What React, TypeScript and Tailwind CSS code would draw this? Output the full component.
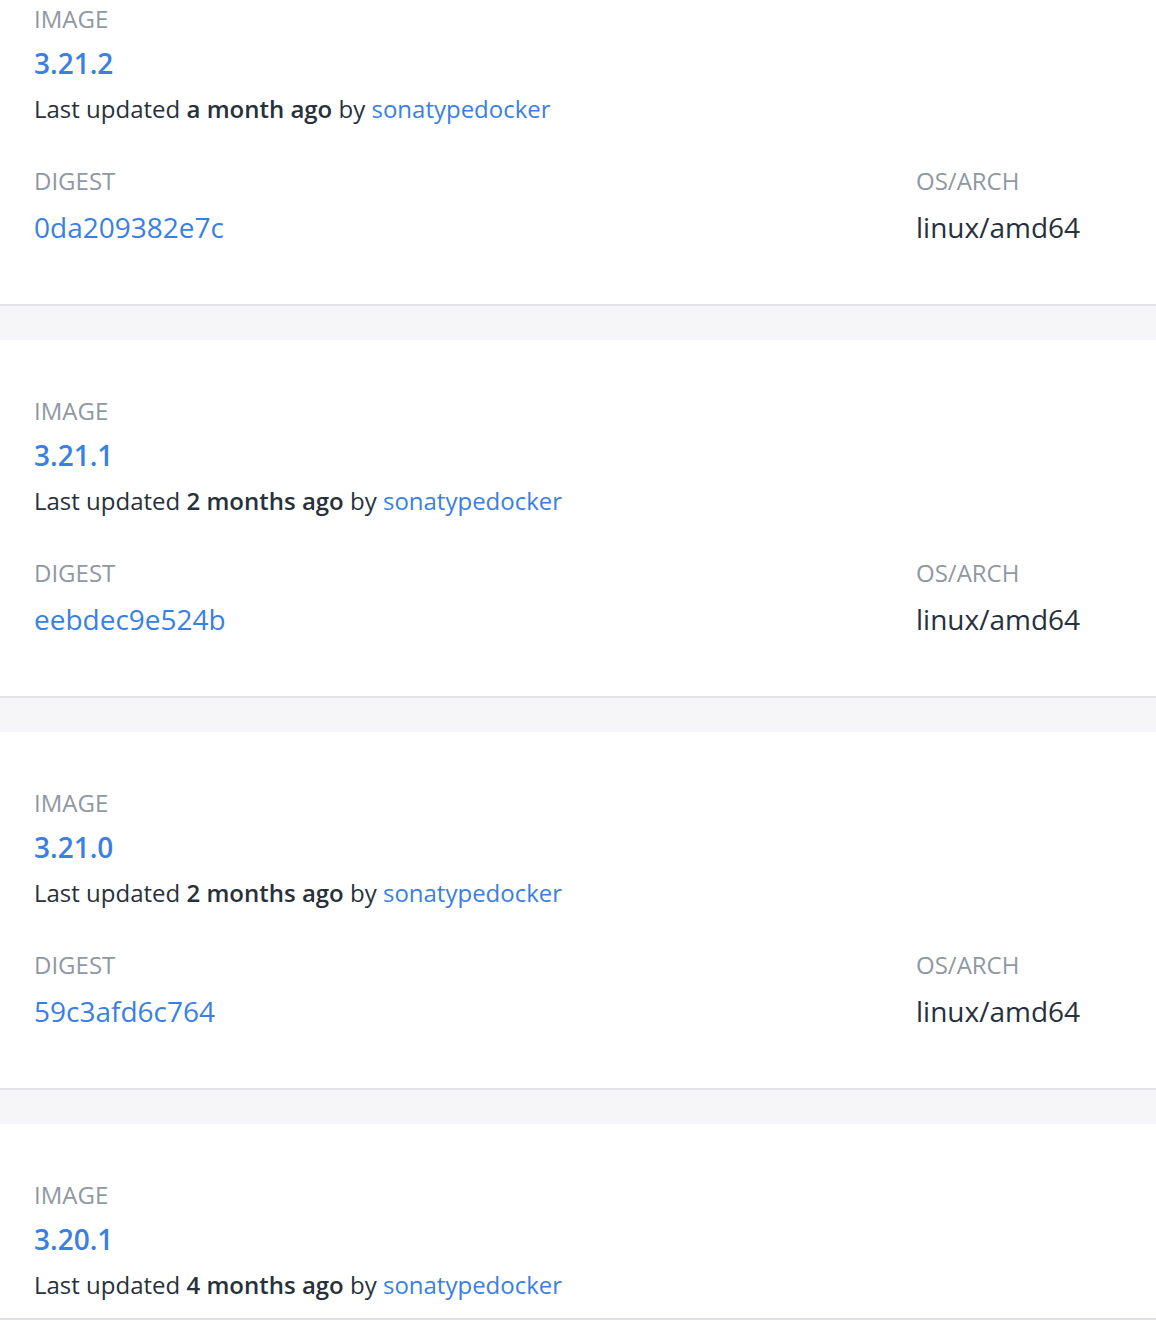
import React from "react";

interface Tag {
  version: string;
  updated: string;
  digest?: string;
  arch?: string;
}

const tags: Tag[] = [
  { version: "3.21.2", updated: "a month ago", digest: "0da209382e7c", arch: "linux/amd64" },
  { version: "3.21.1", updated: "2 months ago", digest: "eebdec9e524b", arch: "linux/amd64" },
  { version: "3.21.0", updated: "2 months ago", digest: "59c3afd6c764", arch: "linux/amd64" },
  { version: "3.20.1", updated: "4 months ago" },
];

function TagCard({ tag }: { tag: Tag }) {
  return (
    <div
      className={`border-b-2 border-[#e1e2e6] bg-white pl-[34px] pt-[55px] ${
        tag.digest ? "pb-[57px]" : "pb-[17px]"
      }`}
    >
      <div className="text-[24px] leading-[32px] text-[#8f98a3]">IMAGE</div>
      <a className="mt-[8px] block text-[28px] font-semibold leading-[40px] text-[#3a7fe2]">
        {tag.version}
      </a>
      <div className="mt-[10px] text-[24px] leading-[32px] text-[#27313b]">
        Last updated <span className="font-semibold">{tag.updated}</span> by{" "}
        <a className="text-[#3a7fe2]">sonatypedocker</a>
      </div>
      {tag.digest && (
        <div className="mt-[40px] flex justify-between">
          <div>
            <div className="text-[24px] leading-[32px] text-[#8f98a3]">DIGEST</div>
            <a className="mt-[10px] block text-[28px] leading-[40px] text-[#3a7fe2]">
              {tag.digest}
            </a>
          </div>
          <div className="w-[240px]">
            <div className="text-[24px] leading-[32px] text-[#8f98a3]">OS/ARCH</div>
            <div className="mt-[10px] text-[28px] leading-[40px] text-[#27313b]">
              {tag.arch}
            </div>
          </div>
        </div>
      )}
    </div>
  );
}

export default function App() {
  return (
    <div
      className="h-[1320px] overflow-hidden bg-[#f6f6f8]"
      style={{ fontFamily: '"Open Sans", "Liberation Sans", sans-serif' }}
    >
      <div className="-mt-[52px] flex flex-col gap-[34px]">
        {tags.map((t) => (
          <TagCard key={t.version} tag={t} />
        ))}
      </div>
    </div>
  );
}
